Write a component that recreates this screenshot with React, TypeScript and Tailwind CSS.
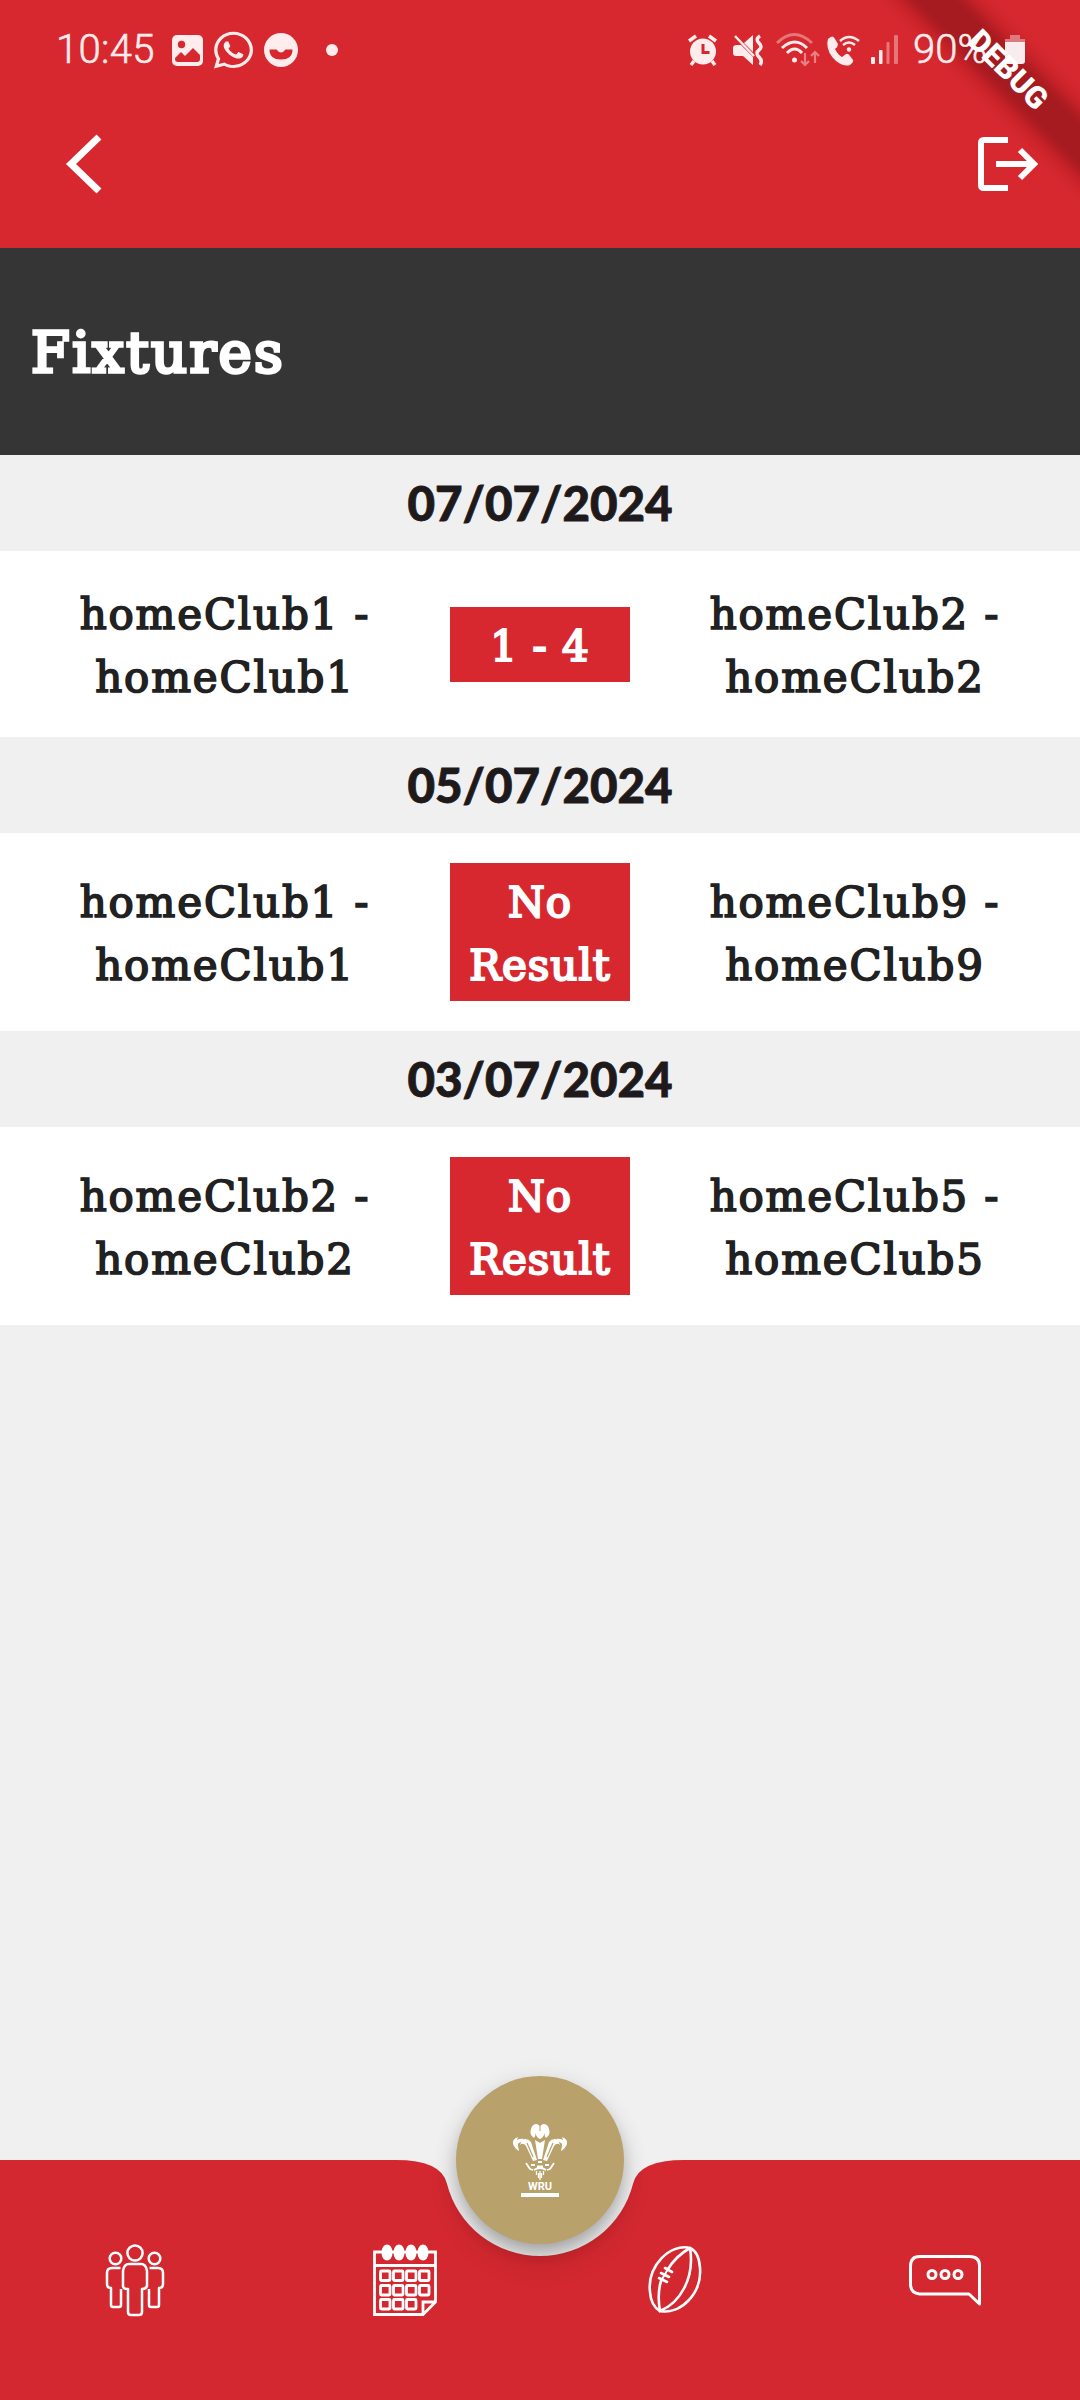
import React from 'react';
import { FaWhatsapp } from 'react-icons/fa';

const slab = "[font-family:'DejaVu_Serif',serif]";

const fixtures = [
  { date: '07/07/2024', home: 'homeClub1', away: 'homeClub2', result: '1 - 4' },
  { date: '05/07/2024', home: 'homeClub1', away: 'homeClub9', result: 'No Result' },
  { date: '03/07/2024', home: 'homeClub2', away: 'homeClub5', result: 'No Result' },
];

function DebugBanner() {
  return (
    <div className="pointer-events-none absolute right-0 top-0 h-[248px] w-[248px] overflow-hidden">
      <div className="absolute left-[26px] top-[54px] h-9 w-[300px] rotate-45 bg-[#a51b20] shadow-[0_0_20px_4px_rgba(120,10,15,0.55)] blur-[4px]" />
    </div>
  );
}

function StatusBar() {
  return (
    <div className="relative flex h-[100px] items-center justify-between pl-[56px] pr-[54px] text-[#ffecec] [font-family:Roboto,sans-serif]">
      <div className="flex items-center">
        <span className="w-[99px] text-[40px] leading-none font-light tracking-[0.3px] [-webkit-text-stroke:0.6px_#ffecec]">10:45</span>
        <svg className="ml-[16px] h-[34px] w-[34px]" viewBox="0 0 34 34">
          <rect x="1" y="2" width="31" height="31" rx="5" fill="currentColor" />
          <circle cx="10.500" cy="11.500" r="3.700" fill="#d7282f" />
          <path d="M4 25l6-6 4 4 8-8 7 7v4q0 3-3 3H7q-3 0-3-3z" fill="#d7282f" />
        </svg>
        <FaWhatsapp className="ml-[9px] h-[42px] w-[39px]" preserveAspectRatio="none" />
        <svg className="ml-[10px] h-[36px] w-[36px]" viewBox="0 0 36 36">
          <circle cx="18" cy="18" r="17" fill="currentColor" />
          <path d="M6.500 17.500h7q4.500 6 9 0h7q0 10-11.500 10t-11.500-10z" fill="#d7282f" />
        </svg>
        <span className="ml-[27px] h-3 w-3 rounded-full bg-[#ffecec]" />
      </div>
      <div className="flex items-center">
        <svg className="h-[32px] w-[32px]" viewBox="0 0 32 32" fill="currentColor">
          <circle cx="15" cy="17.500" r="13" />
          <path d="M1 7l7-5M28 7l-7-5M6 27l-3 4M24 27l3 4" stroke="currentColor" strokeWidth="3.500" />
          <path d="M15 10v8.500h6.500" stroke="#d7282f" strokeWidth="3" fill="none" />
        </svg>
        <svg className="ml-[12px] h-[32px] w-[32px]" viewBox="0 0 32 32">
          <path d="M1 14q0-3 4-3h4L21 23v8L11 22H4q-3 0-3-3zM12 9l9-8v17z" fill="currentColor" />
          <path d="M3 2l19 20" stroke="currentColor" strokeWidth="2.500" />
          <path d="M28 2q-5 3-1 7t0 7 0 7 1 8" stroke="currentColor" strokeWidth="3.500" fill="none" />
        </svg>
        <svg className="ml-[12px] h-[36px] w-[44px]" viewBox="0 0 44 36" fill="none" stroke="currentColor" strokeWidth="3">
          <path d="M1 11q17-17 35 0" opacity=".4" />
          <path d="M6 16q13-12 25 0M11 21q8-8 15 0" />
          <circle cx="18.500" cy="28" r="2.500" fill="currentColor" stroke="none" />
          <path d="M29 21v12m-4-4l4 4 4-4M39 31V20m-4 4l4-4 4 4" strokeWidth="2.200" opacity=".45" />
        </svg>
        <svg className="ml-[6px] h-[32px] w-[34px]" viewBox="0 0 34 32" fill="none">
          <path d="M2 5Q7 0 9 5l3 5q0 3-3 5 3 6 7 8l4-3q2-1 4 2l3 4q1 2-3 5-6 2-14-4Q-1 17 2 5z" fill="currentColor" />
          <path d="M14 7q9-8 19 0M17 11q6-5 12 0" stroke="currentColor" strokeWidth="2.500" />
          <circle cx="23" cy="15.500" r="2.200" fill="currentColor" />
        </svg>
        <svg className="ml-[10px] h-[32px] w-[30px]" viewBox="0 0 30 32" fill="currentColor">
          <rect x="1" y="23" width="4" height="7" rx="1" />
          <rect x="9" y="16" width="3.500" height="14" rx="1" />
          <rect x="16.500" y="8" width="3" height="22" rx="1" opacity=".4" />
          <rect x="24" y="1" width="4" height="29" rx="1" opacity=".4" />
        </svg>
        <span className="ml-[13px] w-[81px] text-[40px] leading-none font-light [-webkit-text-stroke:0.6px_#ffecec]">90%</span>
        <svg className="ml-[10px] h-[32px] w-[22px]" viewBox="0 0 22 32">
          <path d="M6 1h10v4h5v4H1V5h5z" fill="#dc7b7e" />
          <path d="M1 8h20v19q0 3-3 3H4q-3 0-3-3z" fill="#f8ecec" />
        </svg>
      </div>
      <span className="absolute left-[958px] top-[52px] w-[100px] rotate-45 text-center text-[30.600px] leading-[36px] font-black text-white">DEBUG</span>
    </div>
  );
}

function Club({ name }: { name: string }) {
  return (
    <div className={`relative top-[2px] flex-1 text-center text-[42px] leading-[63px] tracking-[1.800px] text-[#212121] [-webkit-text-stroke:1.700px_#212121] ${slab}`}>
      {name} -<br />{name}
    </div>
  );
}

function Feathers() {
  return (
    <svg className="h-[76px] w-[56px]" viewBox="0 0 56 76" fill="#fff">
      <path d="M28 3l3-2q5 0 6 5 2 6-3 9-2-2-1-5-2 5-5 6-3-1-5-6 1 3-1 5-5-3-3-9 1-5 6-5z" />
      <path d="M28 2v6" stroke="#b9a16b" strokeWidth="1" />
      <path d="M23 17l5 3 5-3-3 19h-4z" />
      <g id="plume">
        <path d="M10 17q5-3 9 2l6 18-4 1-7-15q-3-4-6-1z" />
        <path d="M15 20l6 14" stroke="#b9a16b" strokeWidth="1.200" />
        <path d="M6 14q-6 2-5 7 2 5 6 7l-1-5q-1-3 3-4l3-3q-4-1-7 1z" />
      </g>
      <use href="#plume" transform="matrix(-1 0 0 1 56 0)" />
      <path d="M14 40l4 6 3 1M42 40l-4 6-3 1M19 42h4M33 42h4M26 39h4M25 43.500h6M22 47q6-4 12 0" fill="none" stroke="#fff" strokeWidth="1.800" />
      <path d="M24.500 48v4M28 48v9M31.500 48v4M26.500 50v5M29.500 50v5" fill="none" stroke="#fff" strokeWidth="1.300" />
      <text x="16" y="66.800" fontFamily="Roboto, sans-serif" fontWeight="700" fontSize="11.500" textLength="24" lengthAdjust="spacingAndGlyphs">WRU</text>
      <rect x="9" y="70" width="38" height="4" />
    </svg>
  );
}

function BottomBar() {
  return (
    <nav className="relative h-[240px] w-full">
      <svg className="absolute inset-x-0 top-0 h-[240px] w-full overflow-hidden" viewBox="0 0 1080 240">
        <path d="M0 0H396Q441 0 446.900 23.400A96 96 0 0 0 633.100 23.400Q639 0 684 0H1080V240H0z" fill="#d32830" />
      </svg>
      <div className="absolute left-[456px] -top-[84px] flex h-[168px] w-[168px] items-center justify-center rounded-full bg-[#b9a16b] pt-[1px] shadow-[0_9px_15px_-3px_rgba(0,0,0,0.2),0_18px_30px_rgba(0,0,0,0.12),0_3px_24px_rgba(0,0,0,0.08)]">
        <Feathers />
      </div>
      <div className="relative grid h-full grid-cols-4 place-items-center">
        <svg className="h-[80px] w-[70px]" viewBox="0 0 70 80" fill="none" stroke="#fff" strokeWidth="2.500" strokeLinejoin="round">
          <circle cx="35" cy="13" r="7.600" /><circle cx="15.500" cy="18.500" r="5.800" /><circle cx="54.500" cy="18.500" r="5.800" />
          <path d="M23 31q1-7 6-7h12q5 0 6 7v15q-1 3-5 3v23q0 3-3 3h-8q-3 0-3-3V49q-5 0-5-3z" />
          <path d="M20.500 28H12q-5 0-5 5v11q0 4 4 4v17q0 2 2 2h6q2 0 2-2V49M49.500 28H58q5 0 5 5v11q0 4-4 4v17q0 2-2 2h-6q-2 0-2-2V49" />
        </svg>
        <svg className="h-[80px] w-[70px]" viewBox="0 0 70 80" fill="none" stroke="#fff" strokeWidth="2.800">
          <path d="M4.500 12h61v50L53 74.500H4.500zM4.500 25.500h61M53 74V62h12.500" />
          <g fill="#fff" stroke="none"><ellipse cx="17" cy="12.500" rx="5.500" ry="8" /><ellipse cx="29" cy="12.500" rx="5.500" ry="8" /><ellipse cx="41" cy="12.500" rx="5.500" ry="8" /><ellipse cx="53" cy="12.500" rx="5.500" ry="8" /></g>
          {[30, 44.500, 58.500].map((y, r) => [10.500, 23.500, 36.500, 49.500].map((x, c) => r === 2 && c === 3 ? null : <rect key={`${x}-${y}`} x={x} y={y + 1} width="9.500" height="9.500" rx="1" />))}
        </svg>
        <svg className="h-[80px] w-[70px]" viewBox="0 0 70 80" fill="none" stroke="#fff" strokeWidth="2.600" strokeLinecap="round">
          <path d="M50 8C30 3 7 26 10 52Q11 66 20 71C40 75 62 54 60 28Q59 12 50 8Z" />
          <path d="M50 8Q36 16 28 29M21 41Q17 54 20 71C40 63 55 38 50 8M21 33l8 4M25 28l7 4M19 38l8 4" />
          <path d="M28 29l-7 12" strokeWidth="2" />
        </svg>
        <svg className="h-[80px] w-[80px]" viewBox="0 0 80 80" fill="none" stroke="#fff" strokeWidth="3">
          <path d="M14.500 16.500h50q10 0 10 9V64L64 54H14.500q-9-1-9-10V26.500q0-10 9-10z" strokeLinejoin="round" />
          <circle cx="27" cy="34.500" r="4" /><circle cx="40" cy="34.500" r="4" /><circle cx="53" cy="34.500" r="4" />
        </svg>
      </div>
    </nav>
  );
}

export default function App() {
  return (
    <div className="flex h-[2400px] w-[1080px] flex-col overflow-hidden bg-[#f0f0f0]">
      <header className="relative h-[248px] shrink-0 bg-[#d7282f]">
        <DebugBanner />
        <StatusBar />
        <div className="relative flex h-[128px] items-center justify-between pl-[64px] pr-[40px]">
          <svg className="h-[64px] w-[40px]" viewBox="0 0 40 64" fill="none" stroke="#fff" strokeWidth="7"><path d="M35 5L7 32l28 27" /></svg>
          <svg className="h-[60px] w-[64px]" viewBox="0 0 64 60" fill="none" stroke="#fff" strokeWidth="6"><path d="M32 6H8q-3 0-3 3v42q0 3 3 3h24M20 30h39M44 16l14 14-14 14" /></svg>
        </div>
      </header>
      <div className="flex h-[207px] shrink-0 items-center bg-[#353535] px-[31px] pt-[2px]">
        <h1 className={`text-[56px] tracking-[2.300px] text-white [-webkit-text-stroke:3.400px_#fff] ${slab}`}>Fixtures</h1>
      </div>
      <main className="flex-1">
        {fixtures.map((f) => (
          <section key={f.date}>
            <h2 className="flex h-[96px] items-center justify-center text-[47.500px] font-black text-[#1e1a1b] [font-family:Lato,sans-serif] [-webkit-text-stroke:0.800px_#1e1a1b]">{f.date}</h2>
            <div className="flex items-center bg-white py-[30px]">
              <Club name={f.home} />
              <div className={`w-[180px] bg-[#d7282f] px-2 pb-[4px] pt-[8px] text-center text-[42px] leading-[63px] tracking-[1px] text-white [-webkit-text-stroke:2.200px_#fff] ${slab}`}>{f.result}</div>
              <Club name={f.away} />
            </div>
          </section>
        ))}
      </main>
      <BottomBar />
    </div>
  );
}
